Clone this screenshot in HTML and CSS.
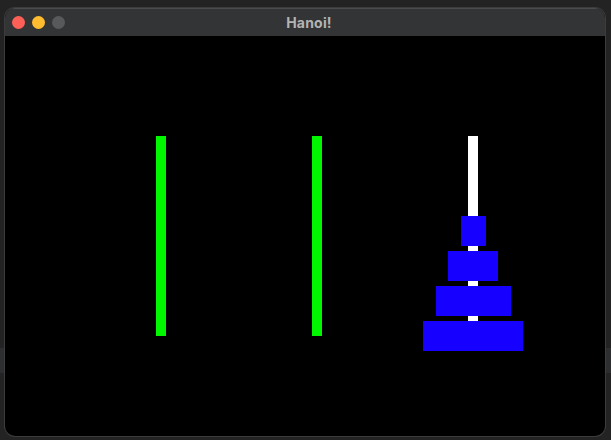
FILE: index.html
```html
<!DOCTYPE html>
<html>
<head>
<meta charset="utf-8">
<title>Hanoi!</title>
<link rel="stylesheet" href="styles.css">
</head>
<body>
<div class="window">
  <div class="titlebar">
    <div class="lights">
      <span class="light red"></span>
      <span class="light yellow"></span>
      <span class="light gray"></span>
    </div>
    <div class="title">Hanoi!</div>
    <div class="spacer"></div>
  </div>
  <div class="board">
    <div class="tower">
      <div class="peg green"></div>
    </div>
    <div class="tower">
      <div class="peg green"></div>
    </div>
    <div class="tower">
      <div class="peg white"></div>
      <div class="stack">
        <div class="disk d1"></div>
        <div class="disk d2"></div>
        <div class="disk d3"></div>
        <div class="disk d4"></div>
      </div>
    </div>
  </div>
</div>
</body>
</html>
```
FILE: styles.css
```css
html, body {
  margin: 0;
  padding: 0;
}
body {
  width: 611px;
  height: 440px;
  overflow: hidden;
  background:
    linear-gradient(to bottom,
      #232323 0, #232323 348px,
      #2c2e30 348px, #2c2e30 373px,
      #232323 373px, #232323 100%);
  padding: 8px 6px 4px 5px;
  box-sizing: border-box;
  font-family: Inter, "Noto Sans", "Liberation Sans", sans-serif;
}
.window {
  width: 600px;
  height: 428px;
  border-radius: 10px;
  overflow: hidden;
  background: #000;
  display: flex;
  flex-direction: column;
  box-shadow: 0 0 0 1px #3c3c3e;
}
.titlebar {
  height: 28px;
  flex: none;
  background: #333436;
  border-top: 1px solid #4a4b4d;
  box-sizing: border-box;
  display: grid;
  grid-template-columns: 1fr auto 1fr;
  align-items: center;
}
.lights {
  display: flex;
  gap: 7px;
  padding-left: 7px;
  padding-bottom: 1px;
}
.light {
  width: 13px;
  height: 13px;
  border-radius: 50%;
}
.red { background: #fe5f57; }
.yellow { background: #febc2e; }
.gray { background: #58595b; }
.title {
  color: #b3b3b3;
  font-weight: 700;
  font-size: 14px;
  letter-spacing: 0.2px;
  padding-left: 8px;
  padding-bottom: 1px;
}
.board {
  flex: 1;
  display: flex;
  padding: 100px 0 0 78px;
}
.tower {
  width: 156px;
  display: grid;
  justify-items: center;
  align-content: start;
}
.tower > * {
  grid-area: 1 / 1;
}
.peg {
  width: 10px;
  height: 200px;
}
.peg.green { background: #00f700; }
.peg.white { background: #ffffff; }
.stack {
  margin-top: 80px;
  display: flex;
  flex-direction: column;
  align-items: center;
  gap: 5px;
}
.disk {
  height: 30px;
  background: #1600ff;
}
.d1 { width: 25px; }
.d2 { width: 50px; }
.d3 { width: 75px; }
.d4 { width: 100px; }
```
